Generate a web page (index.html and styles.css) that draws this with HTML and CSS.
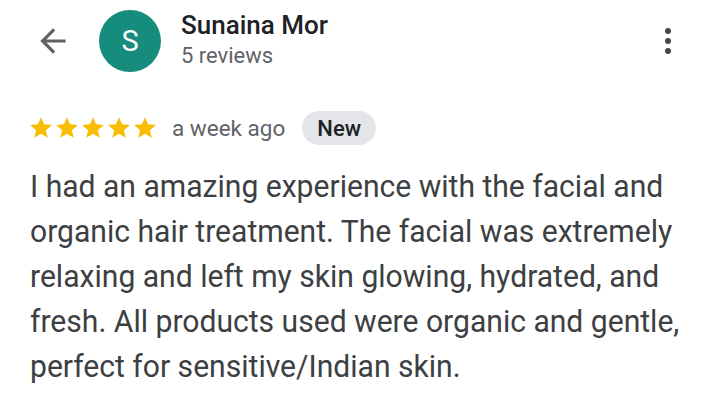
FILE: index.html
```html
<!DOCTYPE html>
<html>
<head>
<meta charset="utf-8">
<link rel="stylesheet" href="styles.css">
</head>
<body>
<div class="page">
  <header class="header">
    <button class="back" aria-label="Back">
      <svg width="38" height="38" viewBox="0 0 24 24"><path d="M20 11H7.83l5.59-5.59L12 4l-8 8 8 8 1.41-1.41L7.83 13H20v-2z" fill="#5f6368"/></svg>
    </button>
    <div class="avatar">S</div>
    <div class="who">
      <div class="name">Sunaina Mor</div>
      <div class="count">5 reviews</div>
    </div>
    <button class="more" aria-label="More">
      <svg width="34" height="34" viewBox="0 0 24 24"><circle cx="12" cy="5" r="2.1" fill="#444746"/><circle cx="12" cy="12" r="2.1" fill="#444746"/><circle cx="12" cy="19" r="2.1" fill="#444746"/></svg>
    </button>
  </header>
  <div class="meta">
    <div class="stars">
      <svg viewBox="0 0 24 24" class="star"><path d="M12 17.27L18.18 21l-1.64-7.03L22 9.24l-7.19-.61L12 2 9.19 8.63 2 9.24l5.46 4.73L5.82 21z"/></svg>
      <svg viewBox="0 0 24 24" class="star"><path d="M12 17.27L18.18 21l-1.64-7.03L22 9.24l-7.19-.61L12 2 9.19 8.63 2 9.24l5.46 4.73L5.82 21z"/></svg>
      <svg viewBox="0 0 24 24" class="star"><path d="M12 17.27L18.18 21l-1.64-7.03L22 9.24l-7.19-.61L12 2 9.19 8.63 2 9.24l5.46 4.73L5.82 21z"/></svg>
      <svg viewBox="0 0 24 24" class="star"><path d="M12 17.27L18.18 21l-1.64-7.03L22 9.24l-7.19-.61L12 2 9.19 8.63 2 9.24l5.46 4.73L5.82 21z"/></svg>
      <svg viewBox="0 0 24 24" class="star"><path d="M12 17.27L18.18 21l-1.64-7.03L22 9.24l-7.19-.61L12 2 9.19 8.63 2 9.24l5.46 4.73L5.82 21z"/></svg>
    </div>
    <span class="ago">a week ago</span>
    <span class="chip">New</span>
  </div>
  <p class="review">I had an amazing experience with the facial and organic hair treatment. The facial was extremely relaxing and left my skin glowing, hydrated, and fresh. All products used were organic and gentle, perfect for sensitive/Indian skin.</p>
</div>
</body>
</html>
```
FILE: styles.css
```css
* { box-sizing: border-box; }
html, body { margin: 0; background: #fff; }
body { font-family: Roboto, "Noto Sans", sans-serif; color: #202124; }
.page { width: 720px; height: 413px; padding: 0 0 0 30px; overflow: hidden; }
.header { display: flex; align-items: center; height: 82px; padding-right: 35px; }
button { border: 0; background: none; padding: 0; display: flex; }
.back { margin-left: 4px; width: 38px; }
.avatar { width: 62px; height: 62px; border-radius: 50%; background: #158c7c; color: #fff; font-size: 29px; display: flex; align-items: center; justify-content: center; margin-left: 27px; }
.who { margin-left: 20px; flex: 1; display: flex; flex-direction: column; margin-top: -1px; }
.name { font-size: 26px; font-weight: 500; color: #202124; line-height: 30px; }
.count { font-size: 22px; color: #5f6368; line-height: 32px; }
.more { width: 34px; }
.meta { display: flex; align-items: center; margin-top: 28px; height: 36px; }
.stars { display: flex; margin-left: -2px; }
.star { width: 26px; height: 26px; fill: #fbbc04; }
.ago { margin-left: 14px; font-size: 22.5px; color: #5f6368; }
.chip { margin-left: 17px; background: #e3e5e8; border-radius: 18px; height: 34px; padding: 0 15px; font-size: 22px; display: flex; align-items: center; font-weight: 500; color: #202124; }
.review { margin: 18px 0 0; font-size: 32px; line-height: 45px; color: #3c4043; width: 725px; transform: scaleX(0.94); transform-origin: 0 0; }
```
